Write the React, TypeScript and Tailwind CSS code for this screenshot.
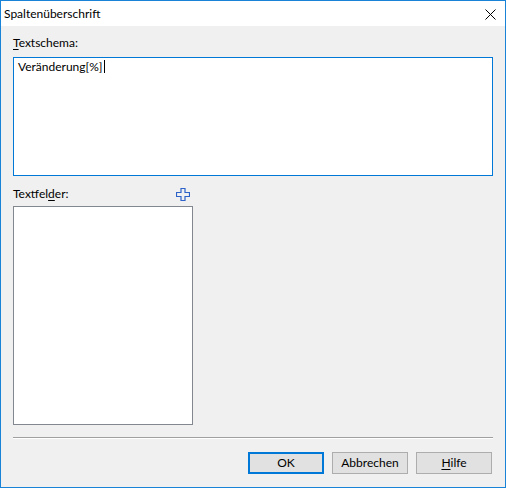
export default function App() {
  return (
    <div className="flex h-[488px] w-[506px] flex-col border border-[#1883d7] bg-[#f0f0f0] text-[12px] text-black [font-family:Lato,'Noto_Sans',sans-serif]">
      <div className="flex h-[25px] items-center justify-between bg-white pl-[3px] pr-[9px]">
        <span className="leading-[16px]">Spaltenüberschrift</span>
        <svg width="11" height="11" viewBox="0 0 11 11" className="mt-[1px]">
          <path d="M0.5 0.5 L10.5 10.5 M10.5 0.5 L0.5 10.5" stroke="#000" strokeWidth="1" fill="none" />
        </svg>
      </div>
      <div className="flex flex-1 flex-col px-[12px] pt-[9px]">
        <div className="h-[16px] leading-[16px]">
          <span className="underline underline-offset-2">T</span>extschema:
        </div>
        <div className="mt-[6px] h-[119px] w-full border border-[#0078d7] bg-white pl-[4px] leading-[14px]">
          <span>Veränderung[%]</span>
          <span className="ml-[1px] inline-block h-[13px] translate-y-[2px] border-l border-black" />
        </div>
        <div className="mt-[10px] flex h-[16px] w-[180px] items-center justify-between leading-[16px]">
          <span>
            Textfel<span className="underline underline-offset-2">d</span>er:
          </span>
          <svg width="14" height="13" viewBox="0 0 14 13" className="mr-[3px]">
            <path
              d="M5 0.5 H9 V4.5 H13.5 V8.5 H9 V12.5 H5 V8.5 H0.5 V4.5 H5 Z"
              stroke="#2d63c8"
              strokeWidth="1.2"
              fill="none"
            />
          </svg>
        </div>
        <div className="mt-[4px] h-[219px] w-[180px] border border-[#828790] bg-white" />
        <div className="mt-[12px] h-[2px] w-full border-t border-b border-t-[#a0a0a0] border-b-white" />
        <div className="mt-[13px] flex justify-end gap-[8px] pr-[1px]">
          <button className="flex h-[22px] w-[76px] items-center justify-center border-2 border-[#0078d7] bg-[#e1e1e1] leading-[16px]">
            OK
          </button>
          <button className="flex h-[22px] w-[76px] items-center justify-center border border-[#adadad] bg-[#e1e1e1] leading-[16px]">
            Abbrechen
          </button>
          <button className="flex h-[22px] w-[76px] items-center justify-center border border-[#adadad] bg-[#e1e1e1] leading-[16px]">
            <span>
              <span className="underline underline-offset-2">H</span>ilfe
            </span>
          </button>
        </div>
      </div>
    </div>
  )
}
